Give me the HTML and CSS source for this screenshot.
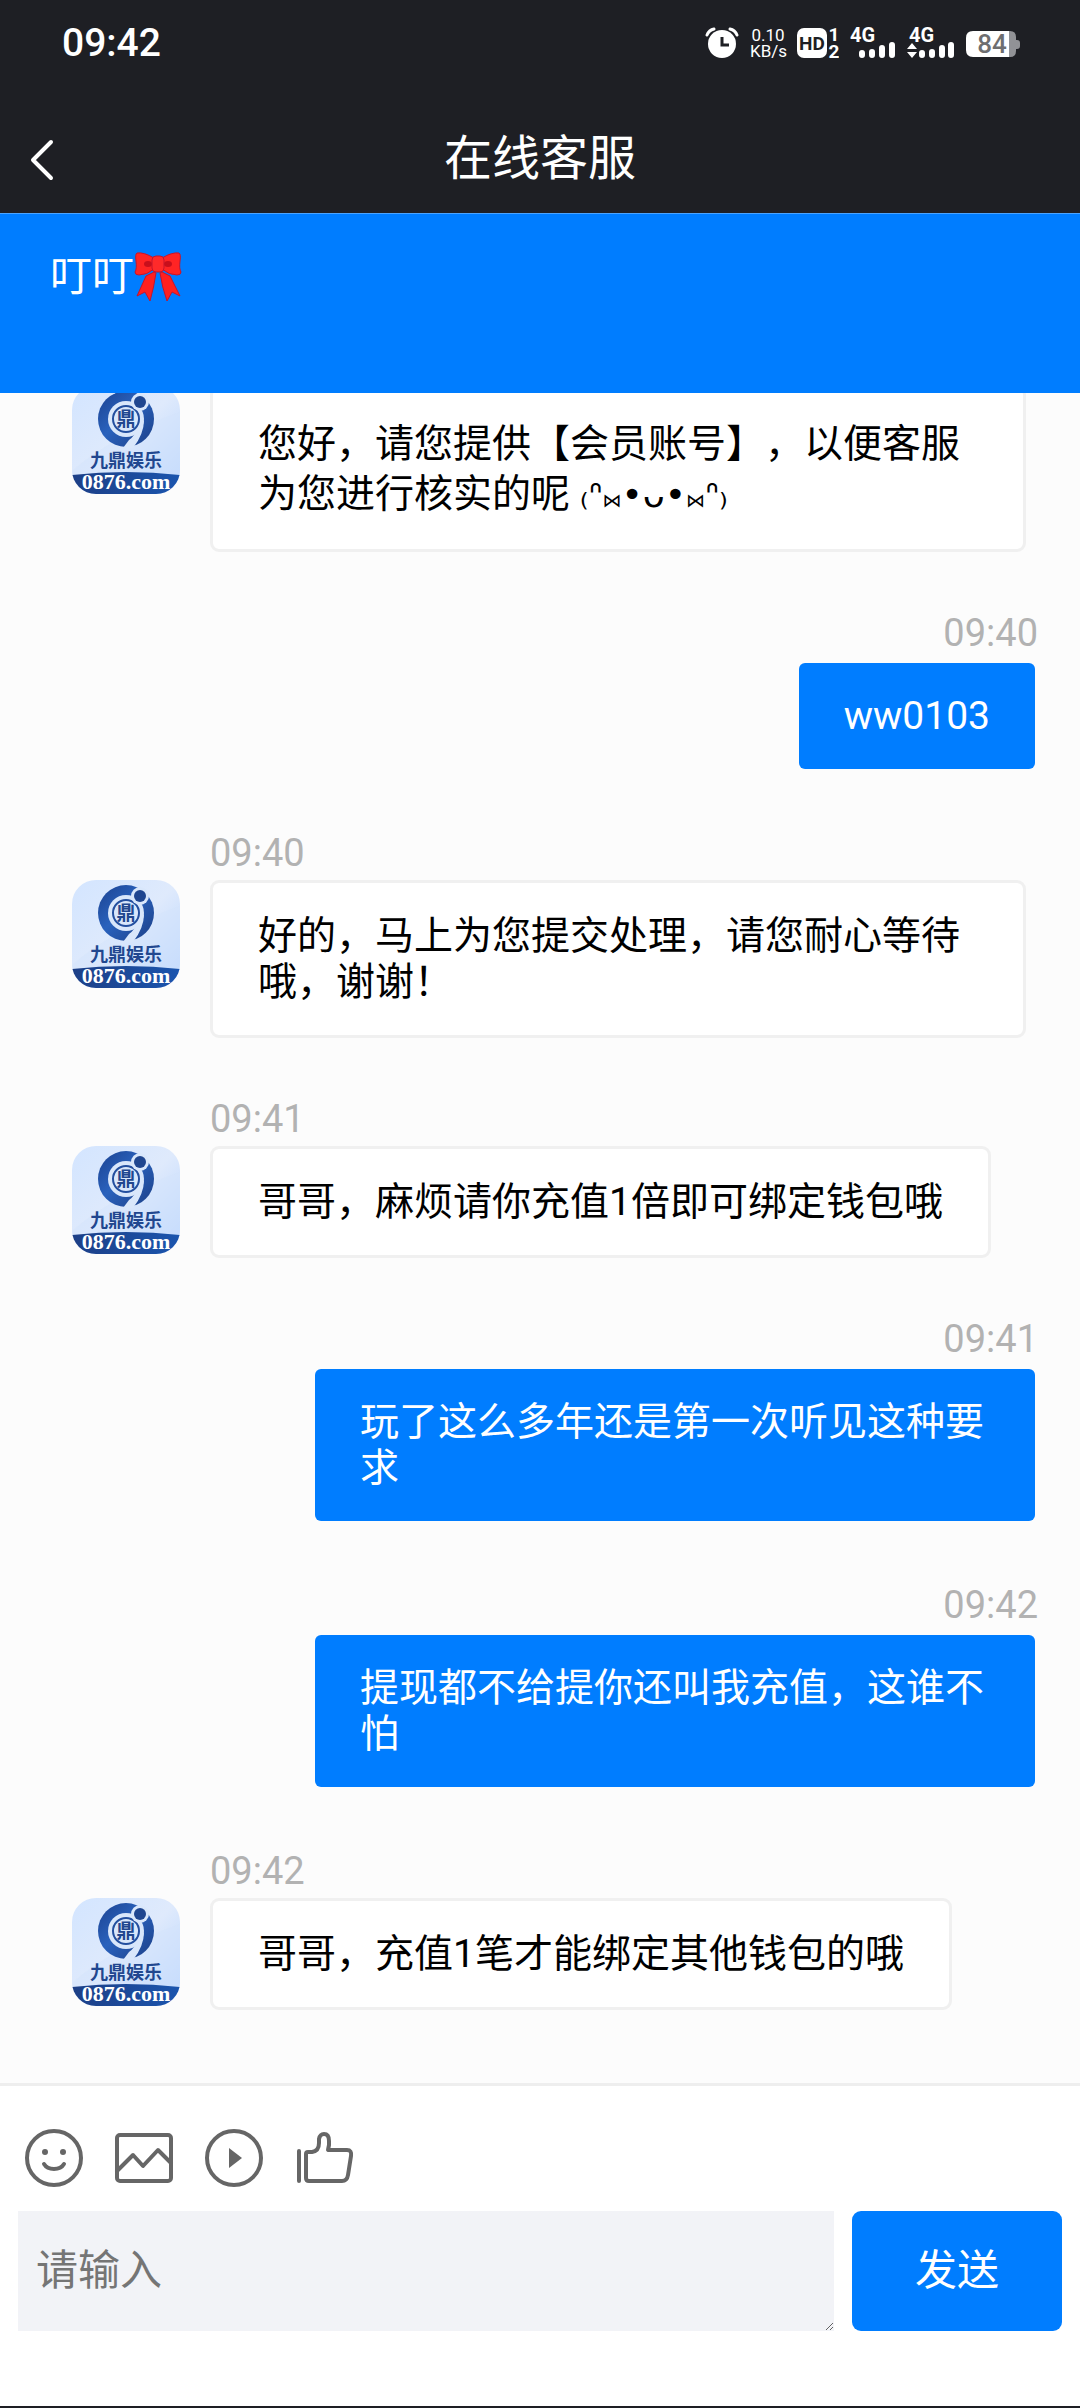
FILE: index.html
```html
<!DOCTYPE html>
<html lang="zh-CN">
<head>
    <meta charset="UTF-8">
    <meta name="viewport" content="width=device-width, initial-scale=1.0">
    <title>在线客服</title>
    <link rel="stylesheet" href="styles.css">
</head>
<body>
    <!-- shared avatar logo -->
    <svg class="defs" width="0" height="0" aria-hidden="true">
        <defs>
            <linearGradient id="logo-bg" x1="0" y1="0" x2="1" y2="1">
                <stop offset="0" stop-color="#d3e5ff"/>
                <stop offset="0.5" stop-color="#dfeafc"/>
                <stop offset="1" stop-color="#b4d2fe"/>
            </linearGradient>
            <linearGradient id="logo-ring" x1="0" y1="0" x2="1" y2="1">
                <stop offset="0" stop-color="#1b4290"/>
                <stop offset="0.45" stop-color="#2a62bd"/>
                <stop offset="1" stop-color="#1c3f86"/>
            </linearGradient>
            <linearGradient id="logo-band" x1="0" y1="0" x2="1" y2="0">
                <stop offset="0" stop-color="#1d3f86"/>
                <stop offset="1" stop-color="#1b55ae"/>
            </linearGradient>
        </defs>
        <symbol id="logo" viewBox="0 0 108 108">
            <rect width="108" height="108" fill="url(#logo-bg)"/>
            <path d="M0 85Q40 50 108 26V92H0Z" fill="#d3e4fc" opacity="0.5"/>
            <circle cx="54" cy="33" r="28" fill="url(#logo-ring)"/>
            <circle cx="54" cy="33" r="18" fill="#d9e7fb"/>
            <path d="M66 40Q63 50 57 54L51 62H61Q72 48 72 34Z" fill="#d9e7fb"/>
            <circle cx="54" cy="33" r="13" fill="none" stroke="#234f9f" stroke-width="2"/>
            <text x="54" y="40" class="logo-mark">鼎</text>
            <circle cx="68" cy="16" r="9" fill="#d9e7fb"/>
            <circle cx="68" cy="16" r="6" fill="#1f4690"/>
            <text x="54" y="81" class="logo-name">九鼎娱乐</text>
            <path d="M0 89Q54 83 108 89V108H0Z" fill="url(#logo-band)"/>
            <text x="54" y="103" class="logo-site">0876.com</text>
        </symbol>
    </svg>

    <div class="status-bar">
        <span class="clock">09:42</span>
        <div class="status-icons">
            <svg width="34" height="32" viewBox="0 0 34 32">
                <circle cx="17" cy="17" r="14" fill="#fff"/>
                <path d="M2 8Q4 3 9 2M32 8Q30 3 25 2" fill="none" stroke="#fff" stroke-width="3" stroke-linecap="round"/>
                <path d="M17 10V18H24" fill="none" stroke="#1e1f24" stroke-width="3"/>
            </svg>
            <span class="net-speed">0.10<br>KB/s</span>
            <svg width="42" height="32" viewBox="0 0 42 32">
                <rect y="1" width="30" height="30" rx="7" fill="#fff"/>
                <text x="15" y="23" class="hd">HD</text>
                <text x="37" y="14" class="sim">1</text>
                <text x="37" y="31" class="sim">2</text>
            </svg>
            <svg width="46" height="32" viewBox="0 0 46 32">
                <text x="0" y="15" class="gen">4G</text>
                <path d="M12 26V28M22 25V28M32 21V28M42 18V28" stroke="#fff" stroke-width="6" stroke-linecap="round"/>
            </svg>
            <svg width="48" height="32" viewBox="0 0 48 32">
                <text x="2" y="15" class="gen">4G</text>
                <path d="M15 26V28M25 25V28M35 21V28M44 18V28" stroke="#fff" stroke-width="6" stroke-linecap="round"/>
                <path d="M0 22L5 16L10 22ZM0 25L5 31L10 25Z" fill="#fff"/>
            </svg>
            <svg width="54" height="32" viewBox="0 0 54 32">
                <path d="M43 4H44Q50 4 50 10V24Q50 30 44 30H43ZM50 13H51Q54 13 54 16V19Q54 22 51 22H50Z" fill="#919296"/>
                <path d="M7 4H43V30H7Q0 30 0 23V11Q0 4 7 4Z" fill="#fff"/>
                <text x="26" y="26" class="battery">84</text>
            </svg>
        </div>
    </div>

    <header class="nav">
        <button class="back" aria-label="返回">
            <svg width="28" height="44" viewBox="0 0 28 44">
                <path d="M23 5L5 23L23 41" fill="none" stroke="#fff" stroke-width="4" stroke-linecap="round" stroke-linejoin="round"/>
            </svg>
        </button>
        <h1>在线客服</h1>
    </header>

    <div class="agent">
        <span>叮叮</span>
        <svg width="48" height="50" viewBox="0 0 48 50">
            <path d="M20 20L12 24L3 44L11 40L16 49Q20 35 22 21ZM28 20L36 24L46 44L38 40L33 49Q28 35 26 21Z" fill="#ff2020" stroke="#c4142c"/>
            <path d="M20 6Q10 0 3 1Q1 2 2 9Q3 17 1 20Q1 23 5 23Q13 23 20 17ZM28 6Q38 0 45 1Q47 2 46 9Q45 17 47 20Q47 23 43 23Q35 23 28 17Z" fill="#ff2424" stroke="#c4142c"/>
            <ellipse cx="14" cy="12" rx="4" ry="3" fill="#c80f1c"/>
            <ellipse cx="34" cy="12" rx="4" ry="3" fill="#c80f1c"/>
            <rect x="18" y="4" width="12" height="16" rx="4" fill="#ff2a2a" stroke="#c4142c"/>
        </svg>
    </div>

    <main class="chat">
        <div class="message">
            <svg class="avatar"><use href="#logo"/></svg>
            <div class="content">
                <p class="bubble tall">您好，请您提供【会员账号】，以便客服为您进行核实的呢 <span class="face">₍ᐢ<small>⋈</small>•ᴗ•<small>⋈</small>ᐢ₎</span></p>
            </div>
        </div>
        <div class="message mine">
            <div class="content">
                <time>09:40</time>
                <p class="bubble">ww0103</p>
            </div>
        </div>
        <div class="message">
            <svg class="avatar"><use href="#logo"/></svg>
            <div class="content">
                <time>09:40</time>
                <p class="bubble">好的，马上为您提交处理，请您耐心等待哦，谢谢！</p>
            </div>
        </div>
        <div class="message">
            <svg class="avatar"><use href="#logo"/></svg>
            <div class="content">
                <time>09:41</time>
                <p class="bubble">哥哥，麻烦请你充值1倍即可绑定钱包哦</p>
            </div>
        </div>
        <div class="message mine">
            <div class="content">
                <time>09:41</time>
                <p class="bubble">玩了这么多年还是第一次听见这种要求</p>
            </div>
        </div>
        <div class="message mine">
            <div class="content">
                <time>09:42</time>
                <p class="bubble">提现都不给提你还叫我充值，这谁不怕</p>
            </div>
        </div>
        <div class="message">
            <svg class="avatar"><use href="#logo"/></svg>
            <div class="content">
                <time>09:42</time>
                <p class="bubble">哥哥，充值1笔才能绑定其他钱包的哦</p>
            </div>
        </div>
    </main>

    <footer class="composer">
        <div class="tools">
            <button aria-label="表情">
                <svg viewBox="0 0 60 60">
                    <circle cx="30" cy="30" r="27"/>
                    <path d="M20 36Q23 41 30 41Q37 41 40 36"/>
                    <circle class="solid" cx="21" cy="24" r="3"/>
                    <circle class="solid" cx="39" cy="24" r="3"/>
                </svg>
            </button>
            <button aria-label="图片">
                <svg viewBox="0 0 60 60">
                    <rect x="3" y="7" width="54" height="46" rx="3"/>
                    <path d="M3 43L19 27L29 38L44 22L57 35"/>
                </svg>
            </button>
            <button aria-label="视频">
                <svg viewBox="0 0 60 60">
                    <circle cx="30" cy="30" r="27"/>
                    <path class="solid" d="M25 20L38 30L25 40Z"/>
                </svg>
            </button>
            <button aria-label="评价">
                <svg viewBox="0 0 60 60">
                    <path d="M5 23V53M12 26Q12 24 14 24H18Q25 23 25 15V11Q26 6 30 6Q35 6 35 13V17L34 22H53Q58 22 57 28L54 47Q53 53 48 53H15Q12 53 12 50Z"/>
                </svg>
            </button>
        </div>
        <form class="input-row">
            <textarea placeholder="请输入" aria-label="请输入"></textarea>
            <button type="submit" class="send">发送</button>
        </form>
    </footer>
</body>
</html>
```

FILE: styles.css
```css
* {
    box-sizing: border-box;
}
body {
    margin: 0;
    height: 100vh;
    display: flex;
    flex-direction: column;
    font-family: Roboto, "Noto Sans CJK SC", sans-serif;
    text-spacing-trim: space-all;
    background-color: #fcfcfc;
    color: #000;
    border-bottom: 2px solid #1e1f24;
}
button {
    border: none;
    padding: 0;
    background: none;
    font-family: inherit;
    cursor: pointer;
}
svg {
    display: block;
    flex: none;
}
.defs {
    position: absolute;
    visibility: hidden;
}

/* top bars */
.status-bar {
    display: flex;
    justify-content: space-between;
    align-items: center;
    height: 86px;
    padding: 0 60px 0 62px;
    background-color: #1e1f24;
    color: #fff;
}
.clock {
    font-size: 39px;
    font-weight: 500;
}
.status-icons {
    display: flex;
    align-items: center;
    gap: 11px;
}
.net-speed {
    width: 36px;
    font-size: 17px;
    line-height: 16px;
    text-align: center;
}
.status-icons text {
    font-weight: 700;
    fill: #fff;
}
.status-icons .hd {
    font-size: 19px;
    fill: #1e1f24;
    text-anchor: middle;
}
.status-icons .sim {
    font-size: 19px;
    text-anchor: middle;
}
.status-icons .gen {
    font-size: 20px;
}
.status-icons .battery {
    font-size: 26px;
    font-weight: 500;
    fill: #6e6e70;
    text-anchor: middle;
}
.nav {
    display: grid;
    grid-template-columns: 28px 1fr 28px;
    align-items: center;
    height: 127px;
    padding: 18px 28px 0;
    background-color: #1e1f24;
    color: #fff;
}
.nav h1 {
    margin: 0;
    font-size: 48px;
    font-weight: 400;
    line-height: 60px;
    text-align: center;
}
.agent {
    display: flex;
    align-items: flex-start;
    height: 180px;
    padding: 38px 50px;
    background-color: #007dff;
    border-top: 1px solid #4ba4ff;
    color: #fff;
    font-size: 42px;
    line-height: 50px;
}

/* conversation */
.chat {
    flex: 1;
    display: flex;
    flex-direction: column;
    justify-content: flex-end;
    gap: 58px;
    padding: 0 42px 73px 72px;
    overflow: hidden;
}
.message {
    flex: none;
    display: flex;
    align-items: flex-start;
    gap: 30px;
}
.content {
    display: flex;
    flex-direction: column;
    align-items: flex-start;
    gap: 4px;
    max-width: 816px;
}
.avatar {
    width: 108px;
    height: 108px;
    border-radius: 24px;
}
.message:not(:first-child) .avatar {
    margin-top: 50px;
}
time {
    font-size: 38px;
    line-height: 46px;
    color: #b2b2b2;
}
.bubble {
    margin: 0;
    padding: 30px 45px;
    border: 3px solid #f0f0f0;
    border-radius: 9px;
    background-color: #fff;
    background-clip: padding-box;
    font-size: 39px;
    line-height: 46px;
}
.tall {
    line-height: 50px;
}
.face {
    font-family: "DejaVu Sans", sans-serif;
    font-size: 36px;
    line-height: 1;
    white-space: nowrap;
}
.face small {
    font-size: 19px;
}
.mine {
    justify-content: flex-end;
}
.mine .content {
    align-items: flex-end;
    max-width: 726px;
}
.mine .bubble {
    border-color: transparent;
    background-color: #007dff;
    color: #fff;
}

.logo-mark, .logo-name {
    font-family: "Noto Sans CJK SC", sans-serif;
    font-weight: 700;
    fill: #21478f;
    text-anchor: middle;
}
.logo-mark {
    font-size: 19px;
}
.logo-name {
    font-size: 18px;
}
.logo-site {
    font-family: "Liberation Serif", serif;
    font-size: 22px;
    font-weight: 700;
    fill: #fff;
    text-anchor: middle;
}

/* bottom input area */
.composer {
    padding: 42px 18px 75px;
    border-top: 3px solid #eee;
    background-color: #fff;
}
.tools {
    display: flex;
    gap: 30px;
    padding: 0 6px;
    margin-bottom: 23px;
}
.tools svg {
    width: 60px;
    height: 60px;
    fill: none;
    stroke: #666;
    stroke-width: 4;
    stroke-linecap: round;
    stroke-linejoin: round;
}
.tools .solid {
    fill: #666;
    stroke: none;
}
.input-row {
    display: flex;
    gap: 18px;
}
textarea {
    flex: 1;
    height: 120px;
    padding: 30px 18px;
    border: none;
    background-color: #f2f3f7;
    font-family: inherit;
    font-size: 42px;
    line-height: 60px;
}
textarea::placeholder {
    color: #757575;
}
.send {
    width: 210px;
    border-radius: 9px;
    background-color: #007dff;
    color: #fff;
    font-size: 42px;
    line-height: 60px;
}
```
